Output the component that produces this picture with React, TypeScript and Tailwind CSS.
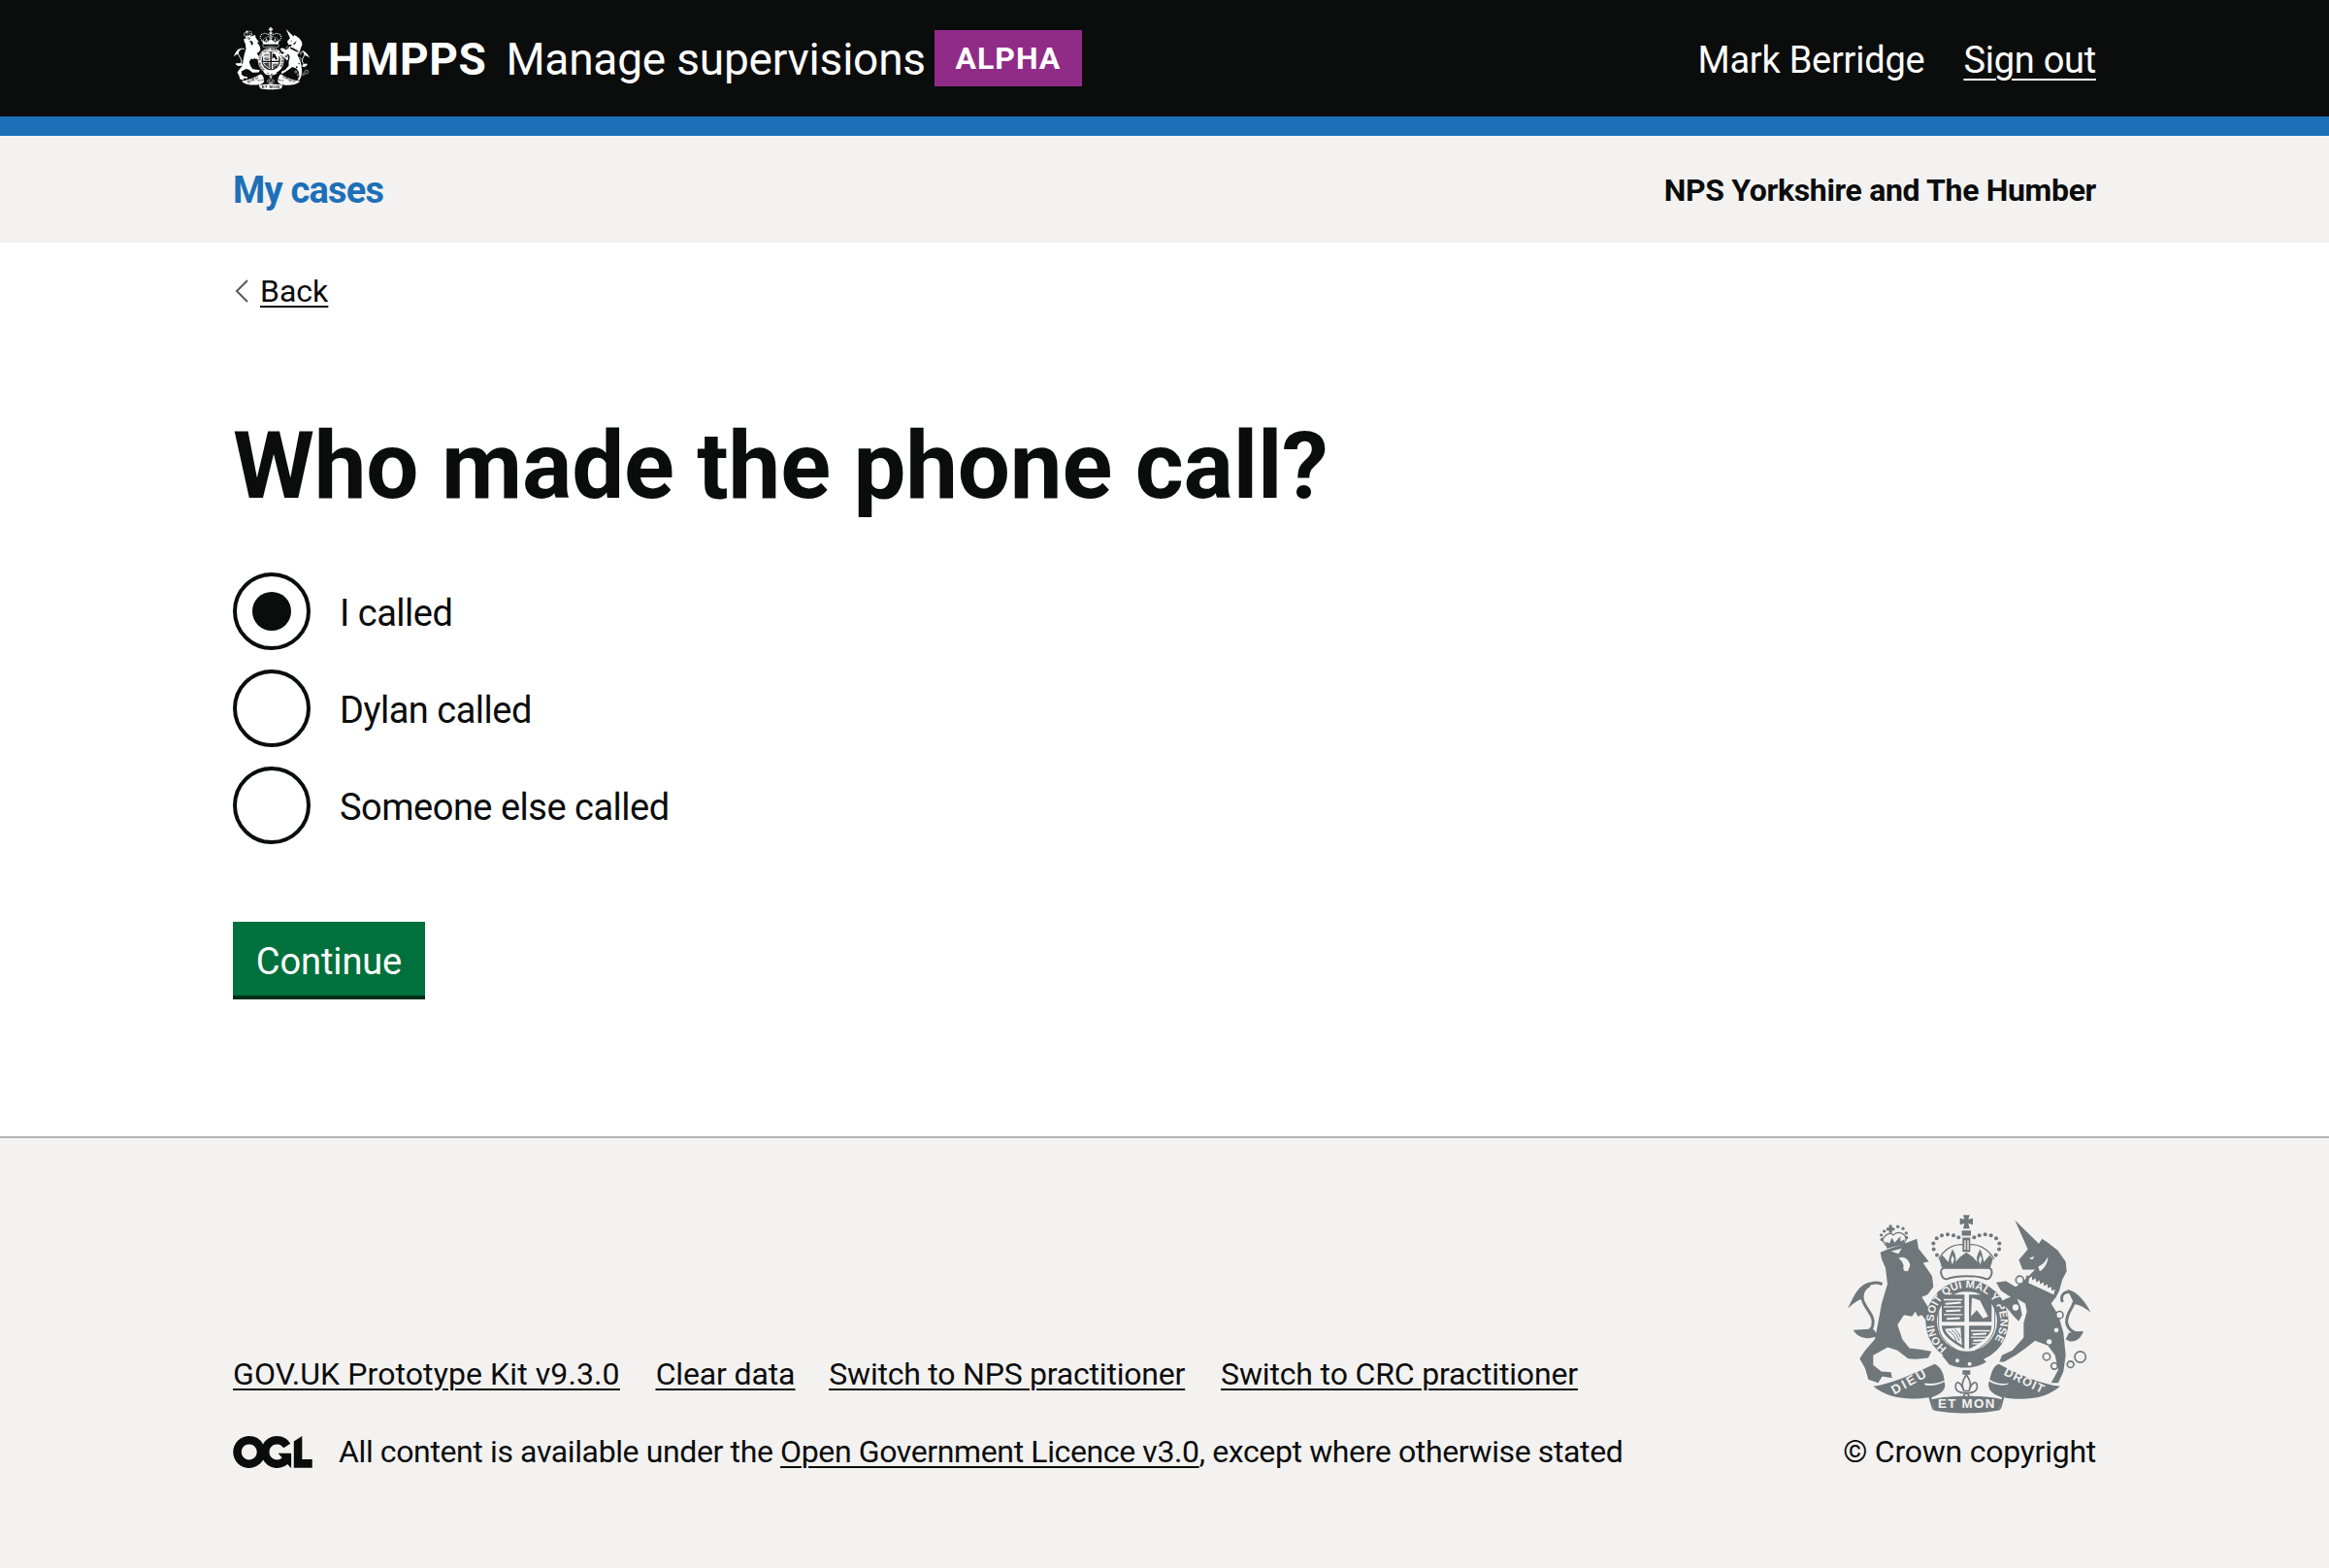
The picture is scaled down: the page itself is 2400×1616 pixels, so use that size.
const font = "font-['Roboto','Noto_Sans',sans-serif]";

// drawn over the coat of arms in the reference, coordinates are 3x the footer size
function Crest({ fg, bg, className }: { fg: string; bg: string; className: string }) {
  const arcDots = [
    [347, 160], [337, 142], [336, 124], [346, 108], [362, 99], [380, 96], [398, 99], [414, 105],
    [462, 105], [478, 99], [496, 96], [514, 99], [530, 108], [540, 124], [539, 142], [529, 160],
  ];
  const lionCrownDots = [[177, 112], [175, 98], [184, 86], [226, 72], [242, 78], [252, 92], [253, 106]];
  const rings = [[686, 474, 11], [710, 503, 10], [760, 498, 10], [790, 475, 17]];
  return (
    <svg viewBox="65 30 765 620" className={className} aria-hidden="true">
      <defs>
        <path id="garter" d="M378 447 A103 103 0 1 1 512 438" />
      </defs>
      {/* lion */}
      <path fill="none" stroke={fg} strokeWidth="9" d="M178 250 C140 236 108 262 118 300 C128 330 158 350 148 380 C140 400 120 402 100 396" />
      <path fill={fg} d="M140 244 C105 250 88 290 72 325 C90 308 105 298 118 296 C118 285 125 265 140 258 Z M88 392 C105 420 135 422 165 410 L150 388 Z" />
      <path
        fill={fg}
        d="M172 152 C195 140 250 125 285 110 L290 140 L322 180 L304 184 L332 225 L336 258 L318 282 L300 290 L345 360 L352 385 L335 395 L315 365 L300 345 L288 350 L280 335 L270 350 L245 345 L225 375 L240 420 L262 448 L295 452 L330 458 L320 478 L282 482 L258 480 L225 455 L195 445 L150 470 L150 500 L175 520 L205 522 L208 540 L178 535 L165 555 L135 545 L125 510 L108 480 L125 455 L155 420 L165 370 L176 310 L194 250 L188 200 L176 172 Z"
      />
      <path fill={bg} d="M205 148 L238 140 L228 156 Z M228 170 C245 160 262 175 264 192 L258 208 C248 214 240 205 244 192 C240 180 235 175 228 170 Z" />
      {/* lion crown */}
      <path fill={fg} d="M199 67 H208 V75 H216 V84 H208 V92 H199 V84 H191 V75 H199 Z" />
      <path fill="none" stroke={fg} strokeWidth="4" d="M190 132 L178 112 C190 92 205 90 212 98 C225 85 245 90 252 108 L245 126" />
      <path fill={fg} d="M188 118 L200 124 L208 106 L216 122 L234 102 L234 118 L246 112 L244 126 L192 140 Z" />
      {lionCrownDots.map(([cx, cy]) => <circle key={"l" + cx} cx={cx} cy={cy} r="5" fill={fg} />)}
      {/* royal crown */}
      <path fill={fg} d="M428 36 L448 36 L444 50 L458 46 L458 66 L444 62 L448 78 L428 78 L432 62 L418 66 L418 46 L432 50 Z M424 84 H452 V100 H424 Z M426 106 H450 V150 H426 Z" />
      <path fill={bg} d="M432 114 H436 V144 H432 Z M441 114 H445 V144 H441 Z" />
      {arcDots.map(([cx, cy]) => <circle key={"c" + cx + cy} cx={cx} cy={cy} r="6" fill={fg} />)}
      <path fill="none" stroke={fg} strokeWidth="4" d="M352 172 C375 135 405 125 428 128 M524 172 C500 135 470 125 448 128" />
      <path fill={fg} d="M395 142 C405 158 408 170 404 182 L418 166 L438 152 L458 166 L472 182 C468 170 471 158 481 142 C488 158 490 172 492 182 L510 160 L520 172 L512 198 H362 L354 172 L364 160 L382 182 C385 170 388 156 395 142 Z" />
      <path fill={bg} d="M400 172 L395 160 L390 176 L395 190 Z M486 172 L481 160 L476 176 L481 190 Z" />
      <path fill="none" stroke={fg} strokeWidth="6" d="M360 218 C358 205 362 200 372 200 H504 C514 200 518 205 516 218 C512 232 506 236 498 234 C470 222 405 222 378 234 C370 236 364 232 360 218 Z" />
      {/* garter and shield */}
      <circle cx="440" cy="365" r="128" fill={fg} />
      <circle cx="440" cy="365" r="93" fill={bg} />
      <path fill="none" stroke={fg} strokeWidth="3" d="M352 272 H526 V375 C526 420 480 452 439 468 C398 452 352 420 352 375 Z" />
      <path fill={fg} d="M362 282 H432 V366 H362 Z M446 282 H516 V366 H446 Z M362 378 H432 V450 C398 430 362 410 362 378 Z M446 378 H516 C516 410 480 435 446 450 Z" />
      <path fill={bg} d="M368 296 H426 V300 H368 Z M368 318 H426 V322 H368 Z M368 342 H426 V346 H368 Z M372 308 L420 304 L422 310 L374 314 Z M374 330 L420 328 L420 334 L376 336 Z M376 354 L418 352 L418 358 L378 360 Z" />
      <path fill={bg} d="M455 292 L480 300 L505 350 L490 356 L470 330 L452 350 Z M452 392 H510 V396 H452 Z M452 412 H506 V416 H452 Z M456 432 H490 V436 H456 Z M456 402 L500 400 L500 406 L458 408 Z M458 422 L496 420 L496 426 L460 428 Z" />
      <path fill={bg} d="M372 388 L420 384 L424 438 C405 425 378 410 372 388 Z" />
      <path fill="none" stroke={fg} strokeWidth="3" d="M382 395 C395 400 405 415 408 430 M392 392 C402 398 412 410 416 425 M402 390 C410 395 416 405 420 415" />
      <text fill={bg} fontSize="33" fontWeight="700" fontFamily="Liberation Sans, sans-serif">
        <textPath href="#garter" textLength="480" lengthAdjust="spacingAndGlyphs">HONI SOIT QUI MAL Y PENSE</textPath>
      </text>
      <path fill={fg} d="M362 470 L385 498 C420 515 470 510 500 490 L470 465 Z" />
      <circle cx="410" cy="486" r="6" fill={bg} />
      <circle cx="448" cy="497" r="6" fill={bg} />
      {/* unicorn */}
      <path fill="none" stroke={fg} strokeWidth="9" d="M735 305 C725 280 750 262 775 285 C775 320 745 335 748 370 C755 395 775 405 795 400" />
      <path fill={fg} d="M750 266 C785 275 805 305 822 336 C800 320 785 312 772 312 Z M800 395 C790 425 765 435 745 420 L755 400 Z" />
      <path
        fill={fg}
        d="M600 175 L628 142 L588 52 L662 125 L672 110 L690 122 L720 145 L745 180 L748 210 L735 235 L725 270 L715 290 L700 310 L722 345 L738 400 L745 470 L738 520 L722 555 L700 555 L722 515 L712 470 L690 440 L650 425 L625 445 L590 470 L555 490 L540 490 L548 470 L580 455 L615 415 L615 370 L625 335 L620 310 L595 295 L605 320 L610 345 L600 365 L585 350 L560 320 L535 310 L560 295 L575 290 L545 270 L530 245 L560 240 L590 258 L610 245 L630 225 L650 205 L635 205 L612 205 Z"
      />
      <path fill={bg} d="M632 170 L648 164 L642 174 Z M660 195 C675 190 685 175 690 165 C690 185 680 200 665 210 Z" />
      <path fill={fg} d="M624 222 L722 268 L714 292 L618 250 Z" />
      <path fill={bg} d="M632 232 L640 226 L642 238 L652 232 L654 244 L664 238 L666 250 L676 244 L678 256 L688 250 L690 262 L700 258 L702 270 L712 266 L708 282 L630 246 Z" />
      <circle cx="603" cy="237" r="12" fill={bg} stroke={fg} strokeWidth="5" />
      <circle cx="590" cy="322" r="12" fill={bg} stroke={fg} strokeWidth="5" />
      <circle cx="726" cy="345" r="11" fill={bg} stroke={fg} strokeWidth="5" />
      <circle cx="694" cy="428" r="8" fill={bg} />
      <circle cx="716" cy="392" r="7" fill={bg} />
      {rings.map(([cx, cy, r]) => <circle key={"r" + cx} cx={cx} cy={cy} r={r} fill="none" stroke={fg} strokeWidth="5" />)}
      {/* motto ribbon */}
      <path fill={fg} d="M150 566 C200 560 270 530 340 497 C358 505 368 525 370 548 C345 560 325 558 308 556 C316 575 320 590 322 600 C270 608 200 608 150 566 Z" />
      <path fill={fg} d="M308 562 C335 566 350 560 370 552 C380 580 350 592 330 600 C332 612 335 625 338 640 C335 640 332 640 322 602 Z" />
      <path fill={fg} d="M330 606 C390 592 490 592 548 606 L538 640 C480 652 390 652 338 640 Z" />
      <path fill={fg} d="M728 566 C670 560 600 530 538 497 C525 500 515 520 510 545 C530 558 548 560 568 556 C562 575 558 590 554 600 C610 610 680 608 728 566 Z" />
      <path fill={fg} d="M568 560 C545 566 525 560 508 550 C500 580 525 592 548 600 C546 612 542 625 538 640 C542 640 546 640 554 602 Z" />
      <text x="215" y="592" fill={bg} fontSize="40" fontWeight="700" fontFamily="Liberation Sans, sans-serif" textLength="116" transform="rotate(-29 215 592)">DIEU</text>
      <text x="350" y="634" fill={bg} fontSize="40" fontWeight="700" fontFamily="Liberation Sans, sans-serif" textLength="175">ET MON</text>
      <text x="552" y="530" fill={bg} fontSize="38" fontWeight="700" fontFamily="Liberation Sans, sans-serif" textLength="132" transform="rotate(26 552 530)">DROIT</text>
      {/* fleur de lis */}
      <path fill={fg} d="M426 516 H450 V530 H426 Z" />
      <path fill={bg} stroke={fg} strokeWidth="5" d="M438 530 C424 550 422 565 430 580 H446 C454 565 452 550 438 530 Z" />
      <path fill="none" stroke={fg} strokeWidth="5" d="M428 572 C418 552 408 548 405 562 C402 578 415 586 425 584 M448 572 C458 552 468 548 471 562 C474 578 461 586 451 584 M420 586 H456 M438 586 C428 592 426 598 438 606 C450 598 448 592 438 586" />
    </svg>
  );
}

function Radio({ label, checked }: { label: string; checked?: boolean }) {
  return (
    <label className="flex h-[80px] items-center gap-[30px]">
      <span className="flex h-[80px] w-[80px] items-center justify-center rounded-full border-[4px] border-[#0b0c0c] bg-white">
        {checked && <span className="h-[40px] w-[40px] rounded-full bg-[#0b0c0c]" />}
      </span>
      <span className="pt-[3px] text-[38px] leading-[50px] tracking-[-0.5px]">{label}</span>
    </label>
  );
}

export default function App() {
  return (
    <div className={`${font} flex min-h-[1616px] flex-col bg-white text-[#0b0c0c]`}>
      <header className="bg-[#0b0c0c] text-white">
        <div className="mx-auto flex h-[120px] w-[1920px] items-center justify-between">
          <div className="flex items-center">
            <Crest fg="#ffffff" bg="#0b0c0c" className="mr-[18px] h-[66px] w-[80px]" />
            <span className="mr-[20px] pt-[2px] text-[46px] leading-[60px] font-bold tracking-[0.6px]">HMPPS</span>
            <span className="pt-[2px] text-[46px] leading-[60px] tracking-[-0.2px]">Manage supervisions</span>
            <span className="ml-[9px] flex h-[58px] w-[152px] items-center justify-center bg-[#912b88] text-[32px] font-bold tracking-[1px]">
              ALPHA
            </span>
          </div>
          <div className="flex items-center gap-[40px] pt-[3px] text-[38px] leading-[50px] tracking-[-0.25px]">
            <span>Mark Berridge</span>
            <a href="#" className="underline decoration-2 underline-offset-[6px]">Sign out</a>
          </div>
        </div>
      </header>
      <div className="h-[20px] bg-[#1d70b8]" />
      <nav className="bg-[#f3f2f1]">
        <div className="mx-auto flex h-[110px] w-[1920px] items-center justify-between pt-[2px]">
          <a href="#" className="text-[38px] font-bold tracking-[-0.8px] text-[#1d70b8]">My cases</a>
          <span className="text-[32px] font-bold tracking-[-0.33px]">NPS Yorkshire and The Humber</span>
        </div>
      </nav>
      <main className="mx-auto w-[1920px] pt-[30px] pb-[141px]">
        <a href="#" className="flex h-[40px] items-center gap-[12px] text-[32px] leading-[40px]">
          <svg viewBox="0 0 14 24" className="ml-[2px] h-[24px] w-[14px] text-[#505a5f]" fill="none" stroke="currentColor" strokeWidth="2">
            <path d="M13 1 L2 12 L13 23" />
          </svg>
          <span className="underline decoration-2 underline-offset-[4px]">Back</span>
        </a>
        <h1 className="mt-[100px] mb-[50px] text-[96px] leading-[120px] font-bold tracking-[-0.2px]">Who made the phone call?</h1>
        <div className="flex flex-col gap-[20px]">
          <Radio label="I called" checked />
          <Radio label="Dylan called" />
          <Radio label="Someone else called" />
        </div>
        <button className="mt-[80px] flex h-[80px] w-[198px] items-center justify-center border-b-[4px] border-[#002d18] bg-[#00703c] pt-[6px] text-[38px] tracking-[-0.1px] text-white">
          Continue
        </button>
      </main>
      <footer className="flex-1 border-t-2 border-[#b1b4b6] bg-[#f3f2f1]">
        <div className="mx-auto flex w-[1920px] items-end justify-between pt-[77px]">
          <div className="text-[32px] leading-[40px]">
            <div className="flex gap-[37px] underline decoration-2 underline-offset-[4px]">
              <a href="#" className="tracking-[0.1px]">GOV.UK Prototype Kit v9.3.0</a>
              <a href="#" className="-mr-[2px] tracking-[-0.15px]">Clear data</a>
              <a href="#" className="tracking-[-0.22px]">Switch to NPS practitioner</a>
              <a href="#" className="tracking-[-0.15px]">Switch to CRC practitioner</a>
            </div>
            <div className="mt-[40px] flex items-center tracking-[-0.38px]">
              <svg viewBox="0 0 483.2 195.7" className="mr-[27px] h-[33px] w-[82px]" fill="currentColor">
                <path d="M421.5 142.8V.1l-50.7 32.3v161.1h112.4v-50.7zm-122.3-9.6A47.12 47.12 0 0 1 221 97.8c0-26 21.1-47.1 47.1-47.1 16.7 0 31.4 8.7 39.7 21.8l42.7-27.2A97.63 97.63 0 0 0 268.1 0c-36.5 0-68.3 20.1-85.1 49.7A98 98 0 0 0 97.8 0C43.9 0 0 43.9 0 97.8s43.9 97.8 97.8 97.8c36.5 0 68.3-20.1 85.1-49.7a97.76 97.76 0 0 0 149.6 25.4l19.4 22.2h3v-87.8h-80l24.3 27.5zM97.8 145c-26 0-47.1-21.1-47.1-47.1s21.1-47.1 47.1-47.1 47.2 21 47.2 47S123.8 145 97.8 145" />
              </svg>
              <span>
                All content is available under the{" "}
                <a href="#" className="underline decoration-2 underline-offset-[4px]">Open Government Licence v3.0</a>, except where otherwise stated
              </span>
            </div>
          </div>
          <div className="flex flex-col items-end">
            <Crest fg="#6f777b" bg="#f3f2f1" className="mr-[3px] mb-[19px] h-[207px] w-[255px]" />
            <span className="text-[32px] leading-[40px] tracking-[-0.25px]">© Crown copyright</span>
          </div>
        </div>
      </footer>
    </div>
  );
}
